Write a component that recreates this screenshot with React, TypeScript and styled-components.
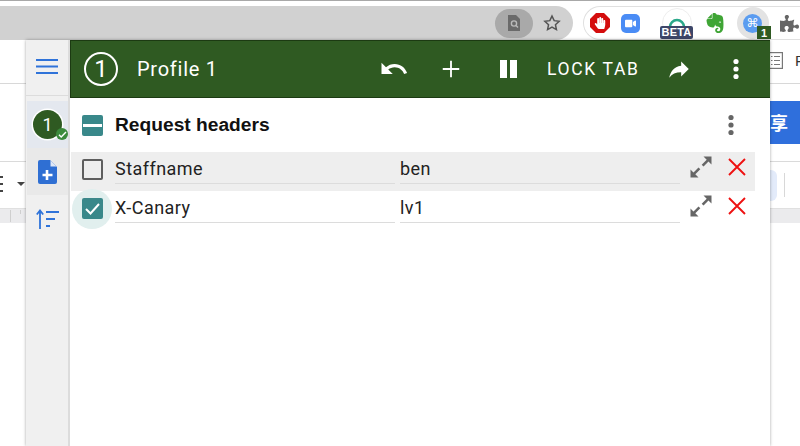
import React from "react";
import styled, { createGlobalStyle } from "styled-components";
import { FaHandPaper, FaPuzzlePiece, FaVideo } from "react-icons/fa";
import { SiEvernote } from "react-icons/si";

const Global = createGlobalStyle`
  html, body { margin: 0; padding: 0; background: #fff; }
  body { font-family: Roboto, "Liberation Sans", sans-serif; }
`;

const Page = styled.div`
  position: relative;
  width: 800px;
  height: 446px;
  overflow: hidden;
  background: #fff;
  display: flex;
  flex-direction: column;
`;

const TopStrip = styled.div`
  height: 5px;
  flex: none;
  border-top: 1px solid #a8a8a8;
  background: #fff;
`;

const ChromeRow = styled.div`
  height: 34px;
  flex: none;
  display: flex;
  align-items: stretch;
  background: #fff;
`;

const Omnibox = styled.div`
  width: 573px;
  flex: none;
  background: #d1d1d1;
  border-radius: 0 17px 17px 0;
  display: flex;
  align-items: center;
  justify-content: flex-end;
  padding-right: 12px;
  gap: 8px;
  box-sizing: border-box;
`;

const LensPill = styled.div`
  width: 38px;
  height: 29px;
  border-radius: 15px;
  background: #a9a9a9;
  display: flex;
  align-items: center;
  justify-content: center;
  margin-right: 2px;
`;

const ExtensionTray = styled.div`
  margin-left: 10px;
  flex: 1;
  border: 1px solid #e0e0e0;
  border-right: none;
  border-radius: 17px 0 0 17px;
  display: flex;
  align-items: center;
  box-sizing: border-box;
`;

const ExtSlot = styled.div<{ $w: number; $ml?: number }>`
  position: relative;
  width: ${(p) => p.$w}px;
  margin-left: ${(p) => p.$ml || 0}px;
  height: 32px;
  flex: none;
  display: flex;
  align-items: center;
  justify-content: center;
`;

const StopSign = styled.div`
  width: 20px;
  height: 20px;
  background: #d40d0d;
  clip-path: polygon(30% 0, 70% 0, 100% 30%, 100% 70%, 70% 100%, 30% 100%, 0 70%, 0 30%);
  display: flex;
  align-items: center;
  justify-content: center;
  color: #fff;
  font-size: 12px;
`;

const ZoomTile = styled.div`
  width: 19px;
  height: 19px;
  border-radius: 5px;
  background: #4a8cf5;
  display: flex;
  align-items: center;
  justify-content: center;
  color: #fff;
  font-size: 11px;
`;

const GrammarRing = styled.div`
  width: 30px;
  height: 30px;
  border-radius: 50%;
  background: #fff;
  border: 1px solid #eee;
  box-sizing: border-box;
  display: flex;
  justify-content: center;
  padding-top: 6px;
`;

const BetaBadge = styled.span`
  position: absolute;
  left: 2px;
  top: 19px;
  width: 33px;
  height: 13px;
  background: #3d4668;
  border-radius: 2px;
  color: #fff;
  font: 700 11px/13px "Liberation Sans", sans-serif;
  letter-spacing: 0.2px;
  text-align: center;
`;

const ActiveExt = styled.div`
  width: 32px;
  height: 32px;
  border-radius: 50%;
  background: #e3e3e3;
  display: flex;
  align-items: center;
  justify-content: center;
`;

const CmdDot = styled.div`
  width: 19px;
  height: 19px;
  border-radius: 50%;
  background: #5b9cf0;
  color: #fff;
  font: 12px/19px "DejaVu Sans", sans-serif;
  text-align: center;
`;

const CountBadge = styled.span`
  position: absolute;
  left: 23px;
  top: 19px;
  width: 14px;
  height: 13px;
  background: #2f5a22;
  color: #fff;
  font: 700 11px/14px "Liberation Sans", sans-serif;
  text-align: center;
`;

const DocHeader = styled.div`
  height: 44px;
  flex: none;
  border-bottom: 1px solid #d8d8d8;
  box-sizing: border-box;
  display: flex;
  align-items: center;
  justify-content: flex-end;
  gap: 12px;
  padding-bottom: 2px;
  color: #333;
  font: 15px "Liberation Sans", sans-serif;
`;

const EdgeLetter = styled.span`
  width: 5px;
  overflow: hidden;
`;

const ShareRow = styled.div`
  height: 78px;
  flex: none;
  display: flex;
  justify-content: flex-end;
  align-items: flex-start;
  padding-top: 17px;
  box-sizing: border-box;
  border-bottom: 1px solid #dadada;
`;

const ShareButton = styled.div`
  width: 120px;
  height: 43px;
  background: #2f6fdc;
  color: #fff;
  font: 700 18px/43px "Noto Sans CJK SC", sans-serif;
  text-align: left;
  padding-left: 90px;
  box-sizing: border-box;
`;

const DocToolbar = styled.div`
  height: 46px;
  flex: none;
  display: flex;
  align-items: center;
  justify-content: space-between;
`;

const ToolLeft = styled.div`
  display: flex;
  align-items: center;
  gap: 14px;
  margin-top: -2px;
`;

const ToolLines = styled.div`
  width: 3px;
  height: 16px;
  border-top: 2px solid #444;
  border-bottom: 2px solid #444;
  box-sizing: border-box;
  background: linear-gradient(#444, #444) center / 100% 2px no-repeat;
`;

const Caret = styled.div`
  width: 0;
  height: 0;
  border-left: 4px solid transparent;
  border-right: 4px solid transparent;
  border-top: 4px solid #444;
`;

const ToolRight = styled.div`
  display: flex;
  align-items: center;
  gap: 7px;
  width: 30px;
`;

const ToolChip = styled.div`
  width: 7px;
  height: 31px;
  background: #e3ebfa;
  border-radius: 0 6px 6px 0;
  flex: none;
`;

const ToolSep = styled.div`
  width: 1px;
  height: 24px;
  background: #d8d8d8;
  flex: none;
`;

const Ruler = styled.div`
  height: 15px;
  flex: none;
  background: #ebebed;
  border-top: 1px solid #e0e0e0;
  box-sizing: border-box;
  display: flex;
  align-items: flex-start;
  gap: 9px;
  padding-left: 10px;
`;

const RulerTick = styled.div<{ $h: number }>`
  width: 1px;
  height: ${(p) => p.$h}px;
  background: #cfcfcf;
  margin-top: 1px;
`;

const Popup = styled.div`
  position: absolute;
  left: 26px;
  top: 40px;
  width: 744px;
  height: 406px;
  display: grid;
  grid-template-columns: 44px 1fr;
  background: #fff;
  box-shadow: 0 0 3px rgba(0, 0, 0, 0.35);
`;

const Sidebar = styled.nav`
  background: #f0f0f0;
  border-right: 2px solid #dcdcdc;
  display: flex;
  flex-direction: column;
  box-sizing: border-box;
`;

const MenuCell = styled.div`
  height: 56px;
  flex: none;
  border-bottom: 1px solid #dcdcdc;
  box-sizing: border-box;
  display: flex;
  align-items: center;
  justify-content: center;
  margin-bottom: 5px;
  padding-bottom: 2px;
`;

const SideCell = styled.div<{ $bg?: string }>`
  position: relative;
  height: 47px;
  flex: none;
  margin-left: 1px;
  background: ${(p) => p.$bg || "transparent"};
  display: flex;
  align-items: center;
  justify-content: center;
`;

const ProfileDot = styled.div`
  width: 29px;
  height: 29px;
  border-radius: 50%;
  background: #2f5a22;
  box-shadow: 0 0 0 1.5px #fff;
  color: #fff;
  font: 18px/29px Roboto, sans-serif;
  text-align: center;
`;

const ActiveTick = styled.div`
  position: absolute;
  left: 29px;
  top: 27px;
  width: 12px;
  height: 12px;
  border-radius: 50%;
  background: #3c8a3c;
  display: flex;
  align-items: center;
  justify-content: center;
`;

const Main = styled.main`
  display: flex;
  flex-direction: column;
  min-width: 0;
`;

const AppBar = styled.header`
  height: 58px;
  flex: none;
  background: #2f5a22;
  border: 1px solid #1c3a12;
  border-width: 1px 0 1px 1px;
  box-sizing: border-box;
  display: flex;
  align-items: center;
  color: #fff;
  padding-left: 13px;
`;

const ProfileRing = styled.div`
  width: 34px;
  height: 34px;
  border: 2px solid #fff;
  border-radius: 50%;
  box-sizing: border-box;
  font: 400 24px/30px Roboto, sans-serif;
  text-align: center;
  flex: none;
`;

const ProfileName = styled.div`
  margin-left: 19px;
  font: 400 20px/24px Roboto, sans-serif;
  letter-spacing: 0.75px;
  flex: 1;
`;

const BarIcon = styled.div<{ $w: number; $ml?: number; $mr?: number }>`
  width: ${(p) => p.$w}px;
  margin-left: ${(p) => p.$ml || 0}px;
  margin-right: ${(p) => p.$mr || 0}px;
  flex: none;
  display: flex;
  align-items: center;
  justify-content: center;
`;

const LockLabel = styled.div`
  width: 93px;
  margin-left: 28px;
  flex: none;
  font: 400 17.5px/20px Roboto, sans-serif;
  letter-spacing: 1.65px;
  white-space: nowrap;
`;

const SectionHead = styled.div`
  height: 54px;
  flex: none;
  display: flex;
  align-items: center;
  padding: 0 27px 0 12px;
`;

const SectionToggle = styled.div`
  width: 21px;
  height: 21px;
  background: #39888a;
  border-radius: 2px;
  display: flex;
  align-items: center;
  justify-content: center;
  flex: none;
  &::after {
    content: "";
    width: 19px;
    height: 3px;
    background: #fff;
  }
`;

const SectionTitle = styled.div`
  margin-left: 12px;
  font: 700 19.2px/22px "Liberation Sans", sans-serif;
  color: #111;
  flex: 1;
`;

const HeaderRow = styled.div<{ $shaded?: boolean }>`
  width: 684px;
  margin-left: 1px;
  height: 39px;
  flex: none;
  background: ${(p) => (p.$shaded ? "#eeeeee" : "transparent")};
  display: flex;
  align-items: flex-start;
  box-sizing: border-box;
  padding-top: 7px;
`;

const CheckWrap = styled.div`
  position: relative;
  width: 44px;
  flex: none;
  display: flex;
  justify-content: flex-start;
  padding-left: 11px;
  box-sizing: border-box;
`;

const Halo = styled.div`
  position: absolute;
  left: 1px;
  top: -9px;
  width: 40px;
  height: 40px;
  border-radius: 50%;
  background: #e1efee;
`;

const EmptyBox = styled.div`
  width: 21px;
  height: 21px;
  border: 2px solid #5e5e5e;
  border-radius: 2px;
  box-sizing: border-box;
  position: relative;
`;

const CheckedBox = styled.div`
  position: relative;
  width: 21px;
  height: 21px;
  border-radius: 2px;
  background: #39888a;
  display: flex;
  align-items: center;
  justify-content: center;
`;

const CellText = styled.div`
  width: 280px;
  height: 24px;
  flex: none;
  border-bottom: 1px solid #dcdcdc;
  font: 400 18px/20px Roboto, sans-serif;
  color: #222;
  letter-spacing: 0.45px;
  margin-right: 5px;
`;

const RowAction = styled.div<{ $w: number; $ml?: number; $mr?: number }>`
  width: ${(p) => p.$w}px;
  margin-left: ${(p) => p.$ml || 0}px;
  margin-right: ${(p) => p.$mr || 0}px;
  height: 16px;
  flex: none;
  display: flex;
  align-items: center;
  justify-content: center;
`;

const ExpandIcon = () => (
  <svg width="24" height="24" viewBox="0 0 24 24" fill="#666">
    <path d="M14.5 1.5h8v8l-3-3-5 5-1.8-1.8 5-5z" />
    <path d="M9.5 22.5h-8v-8l3 3 5-5 1.8 1.8-5 5z" />
  </svg>
);

const CloseIcon = () => (
  <svg width="18" height="18" viewBox="0 0 18 18" stroke="#ee1111" strokeWidth="1.9" fill="none">
    <path d="M1 1l16 16M17 1L1 17" />
  </svg>
);

const MoreIcon = ({ color, size }: { color: string; size: number }) => (
  <svg width={size} height={size} viewBox="0 0 24 24" fill={color}>
    <circle cx="12" cy="4.5" r="2.6" />
    <circle cx="12" cy="12" r="2.6" />
    <circle cx="12" cy="19.5" r="2.6" />
  </svg>
);

const rows = [
  { name: "Staffname", value: "ben", checked: false },
  { name: "X-Canary", value: "lv1", checked: true },
];

export default function App() {
  return (
    <Page>
      <Global />
      <TopStrip />
      <ChromeRow>
        <Omnibox>
          <LensPill>
            <svg width="14" height="16" viewBox="0 0 14 16">
              <path d="M1 0h8l4 4v12H1z" fill="#6a6a6a" />
              <circle cx="7" cy="8.5" r="2.6" fill="none" stroke="#bbb" strokeWidth="1.4" />
              <path d="M9 10.5l2 2" stroke="#bbb" strokeWidth="1.4" />
            </svg>
          </LensPill>
          <svg width="18" height="18" viewBox="0 0 24 24" fill="none" stroke="#555" strokeWidth="2">
            <path d="M12 2.8l2.9 6.1 6.6.8-4.9 4.5 1.3 6.6-5.9-3.3-5.9 3.3 1.3-6.6-4.9-4.5 6.6-.8z" />
          </svg>
        </Omnibox>
        <ExtensionTray>
          <ExtSlot $w={32}>
            <StopSign>
              <FaHandPaper />
            </StopSign>
          </ExtSlot>
          <ExtSlot $w={29}>
            <ZoomTile>
              <FaVideo />
            </ZoomTile>
          </ExtSlot>
          <ExtSlot $w={37} $ml={13}>
            <GrammarRing>
              <svg width="18" height="14" viewBox="0 0 18 14" fill="none" stroke="#2aa88a" strokeWidth="2.6">
                <path d="M2 12a7 7 0 1 1 14 0" />
              </svg>
            </GrammarRing>
            <BetaBadge>BETA</BetaBadge>
          </ExtSlot>
          <ExtSlot $w={39}>
            <SiEvernote size={20} color="#3fa535" />
          </ExtSlot>
          <ExtSlot $w={37}>
            <ActiveExt>
              <CmdDot>⌘</CmdDot>
            </ActiveExt>
            <CountBadge>1</CountBadge>
          </ExtSlot>
          <ExtSlot $w={37}>
            <FaPuzzlePiece size={19} color="#666" />
          </ExtSlot>
        </ExtensionTray>
      </ChromeRow>
      <DocHeader>
        <svg width="15" height="17" viewBox="0 0 15 17" fill="none" stroke="#777" strokeWidth="1.2">
          <rect x="0.6" y="0.6" width="13.8" height="15.8" />
          <path d="M3 4.500h1.500M6 4.500h6M3 8.500h1.500M6 8.500h6M3 12.500h1.500M6 12.500h6" />
        </svg>
        <EdgeLetter>R</EdgeLetter>
      </DocHeader>
      <ShareRow>
        <ShareButton>享</ShareButton>
      </ShareRow>
      <DocToolbar>
        <ToolLeft>
          <ToolLines />
          <Caret />
        </ToolLeft>
        <ToolRight>
          <ToolChip />
          <ToolSep />
        </ToolRight>
      </DocToolbar>
      <Ruler>
        <RulerTick $h={12} />
        <RulerTick $h={4} />
      </Ruler>

      <Popup>
        <Sidebar>
          <MenuCell>
            <svg width="22" height="15" viewBox="0 0 22 15" fill="#2f73d9">
              <rect x="0" y="0" width="22" height="2" />
              <rect x="0" y="6.500" width="22" height="2" />
              <rect x="0" y="13" width="22" height="2" />
            </svg>
          </MenuCell>
          <SideCell $bg="#e4e8ef">
            <ProfileDot>1</ProfileDot>
            <ActiveTick>
              <svg width="9" height="9" viewBox="0 0 9 9" fill="none" stroke="#fff" strokeWidth="1.4">
                <path d="M1 4.800l2.200 2.200L8 2" />
              </svg>
            </ActiveTick>
          </SideCell>
          <SideCell $bg="#e9e9e9">
            <svg width="19" height="24" viewBox="0 0 19 24">
              <path d="M2 0h10l7 7v15a2 2 0 0 1-2 2H2a2 2 0 0 1-2-2V2a2 2 0 0 1 2-2z" fill="#2f6fd3" />
              <path d="M12.500 0.500L18.500 6.500H12.500z" fill="#dfe8f7" />
              <path d="M9 10v10M4.500 15h10" stroke="#fff" strokeWidth="2.600" />
            </svg>
          </SideCell>
          <SideCell>
            <svg width="24" height="20" viewBox="0 0 24 20" fill="none" stroke="#2f73d9" strokeWidth="1.800">
              <path d="M4 20V2M0.800 5.500L4 1.500l3.200 4" />
              <path d="M10 3h13M10 10h9M10 17h4" />
            </svg>
          </SideCell>
        </Sidebar>
        <Main>
          <AppBar>
            <ProfileRing>1</ProfileRing>
            <ProfileName>Profile 1</ProfileName>
            <BarIcon $w={36}>
              <svg width="30" height="30" viewBox="0 0 24 24" fill="#fff">
                <path d="M12.500 8c-2.650 0-5.050.99-6.900 2.600L2 7v9h9l-3.620-3.620c1.390-1.160 3.160-1.880 5.120-1.880 3.540 0 6.550 2.310 7.600 5.500l2.370-.78C21.080 11.030 17.150 8 12.500 8z" />
              </svg>
            </BarIcon>
            <BarIcon $w={22} $ml={28}>
              <svg width="24" height="24" viewBox="0 0 24 24" fill="#fff">
                <path d="M21 13h-8v8h-2v-8H3v-2h8V3h2v8h8z" />
              </svg>
            </BarIcon>
            <BarIcon $w={22} $ml={35}>
              <svg width="17" height="18" viewBox="0 0 17 18" fill="#fff">
                <path d="M0 0h7v18H0zM10 0h7v18h-7z" />
              </svg>
            </BarIcon>
            <LockLabel>LOCK TAB</LockLabel>
            <BarIcon $w={26} $ml={26}>
              <svg width="28" height="28" viewBox="0 0 24 24" fill="#fff">
                <path d="M14 9V5l7 7-7 7v-4.100c-5 0-8.500 1.600-11 5.100 1-5 4-10 11-11z" />
              </svg>
            </BarIcon>
            <BarIcon $w={26} $ml={31} $mr={21}>
              <MoreIcon color="#fff" size={24} />
            </BarIcon>
          </AppBar>
          <SectionHead>
            <SectionToggle />
            <SectionTitle>Request headers</SectionTitle>
            <MoreIcon color="#666" size={24} />
          </SectionHead>
          {rows.map((row, i) => (
            <HeaderRow key={row.name} $shaded={i === 0}>
              <CheckWrap>
                {row.checked && <Halo />}
                {row.checked ? (
                  <CheckedBox>
                    <svg width="17" height="17" viewBox="0 0 17 17" fill="none" stroke="#fff" strokeWidth="2">
                      <path d="M2 9l4.500 4.500L15 4" />
                    </svg>
                  </CheckedBox>
                ) : (
                  <EmptyBox />
                )}
              </CheckWrap>
              <CellText>{row.name}</CellText>
              <CellText>{row.value}</CellText>
              <RowAction $w={24} $ml={4} $mr={11}>
                <ExpandIcon />
              </RowAction>
              <RowAction $w={26}>
                <CloseIcon />
              </RowAction>
            </HeaderRow>
          ))}
        </Main>
      </Popup>
    </Page>
  );
}
